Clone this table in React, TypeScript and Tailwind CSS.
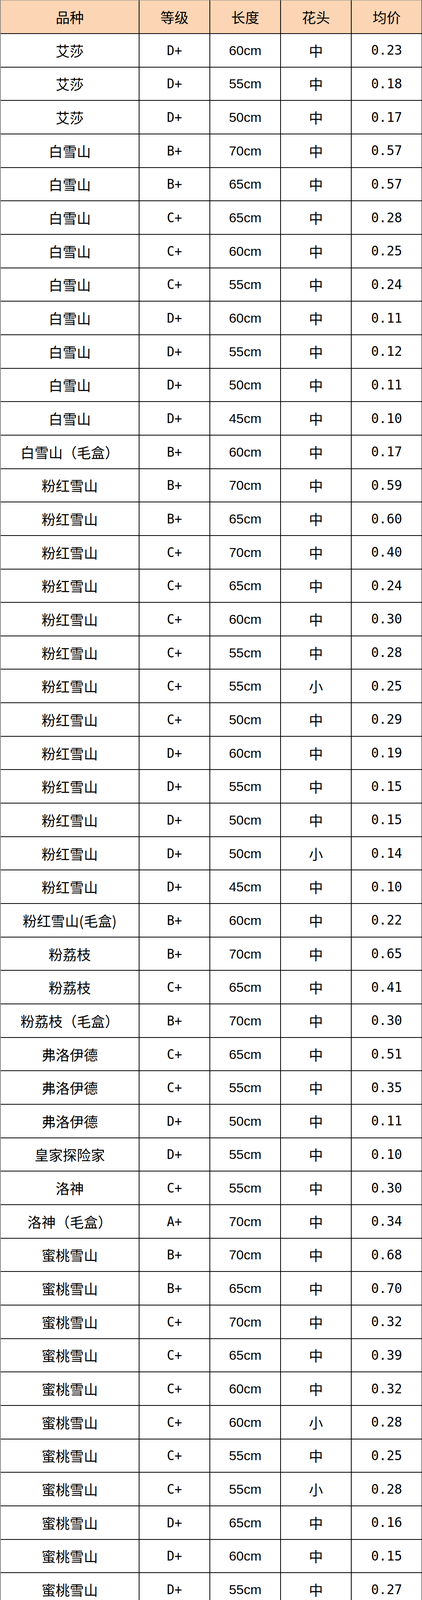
import React from "react";

type Row = [string, string, string, string, string];

const rows: Row[] = [
  ["艾莎", "D+", "60cm", "中", "0.23"],
  ["艾莎", "D+", "55cm", "中", "0.18"],
  ["艾莎", "D+", "50cm", "中", "0.17"],
  ["白雪山", "B+", "70cm", "中", "0.57"],
  ["白雪山", "B+", "65cm", "中", "0.57"],
  ["白雪山", "C+", "65cm", "中", "0.28"],
  ["白雪山", "C+", "60cm", "中", "0.25"],
  ["白雪山", "C+", "55cm", "中", "0.24"],
  ["白雪山", "D+", "60cm", "中", "0.11"],
  ["白雪山", "D+", "55cm", "中", "0.12"],
  ["白雪山", "D+", "50cm", "中", "0.11"],
  ["白雪山", "D+", "45cm", "中", "0.10"],
  ["白雪山（毛盒）", "B+", "60cm", "中", "0.17"],
  ["粉红雪山", "B+", "70cm", "中", "0.59"],
  ["粉红雪山", "B+", "65cm", "中", "0.60"],
  ["粉红雪山", "C+", "70cm", "中", "0.40"],
  ["粉红雪山", "C+", "65cm", "中", "0.24"],
  ["粉红雪山", "C+", "60cm", "中", "0.30"],
  ["粉红雪山", "C+", "55cm", "中", "0.28"],
  ["粉红雪山", "C+", "55cm", "小", "0.25"],
  ["粉红雪山", "C+", "50cm", "中", "0.29"],
  ["粉红雪山", "D+", "60cm", "中", "0.19"],
  ["粉红雪山", "D+", "55cm", "中", "0.15"],
  ["粉红雪山", "D+", "50cm", "中", "0.15"],
  ["粉红雪山", "D+", "50cm", "小", "0.14"],
  ["粉红雪山", "D+", "45cm", "中", "0.10"],
  ["粉红雪山(毛盒)", "B+", "60cm", "中", "0.22"],
  ["粉荔枝", "B+", "70cm", "中", "0.65"],
  ["粉荔枝", "C+", "65cm", "中", "0.41"],
  ["粉荔枝（毛盒）", "B+", "70cm", "中", "0.30"],
  ["弗洛伊德", "C+", "65cm", "中", "0.51"],
  ["弗洛伊德", "C+", "55cm", "中", "0.35"],
  ["弗洛伊德", "D+", "50cm", "中", "0.11"],
  ["皇家探险家", "D+", "55cm", "中", "0.10"],
  ["洛神", "C+", "55cm", "中", "0.30"],
  ["洛神（毛盒）", "A+", "70cm", "中", "0.34"],
  ["蜜桃雪山", "B+", "70cm", "中", "0.68"],
  ["蜜桃雪山", "B+", "65cm", "中", "0.70"],
  ["蜜桃雪山", "C+", "70cm", "中", "0.32"],
  ["蜜桃雪山", "C+", "65cm", "中", "0.39"],
  ["蜜桃雪山", "C+", "60cm", "中", "0.32"],
  ["蜜桃雪山", "C+", "60cm", "小", "0.28"],
  ["蜜桃雪山", "C+", "55cm", "中", "0.25"],
  ["蜜桃雪山", "C+", "55cm", "小", "0.28"],
  ["蜜桃雪山", "D+", "65cm", "中", "0.16"],
  ["蜜桃雪山", "D+", "60cm", "中", "0.15"],
  ["蜜桃雪山", "D+", "55cm", "中", "0.27"],
  ["蜜桃雪山", "D+", "50cm", "中", "0.15"],
  ["蜜桃雪山", "D+", "50cm", "小", "0.18"],
  ["蜜桃雪山", "D+", "45cm", "中", "0.15"],
  ["蜜桃雪山", "D+", "40cm", "中", "0.16"],
  ["蜜桃雪山（毛盒）", "B+", "60cm", "中", "0.23"],
  ["水瓶座", "C+", "55cm", "中", "0.33"],
  ["水瓶座", "D+", "50cm", "中", "0.21"],
  ["水瓶座", "D+", "45cm", "中", "0.12"],
  ["水瓶座", "D+", "40cm", "中", "0.12"],
  ["水瓶座", "D+", "40cm", "小", "0.10"],
  ["水瓶座（毛盒）", "A+", "65cm", "中", "0.26"],
];

const cjk = "font-['Noto_Sans_CJK_SC',sans-serif] font-normal text-[36px]";
const mono = "font-['DejaVu_Sans_Mono','Noto_Sans_CJK_SC',monospace]";
const arial = "font-['Liberation_Sans','Noto_Sans_CJK_SC',sans-serif] text-[34px]";

const base =
  "flex h-full items-center justify-center overflow-hidden whitespace-nowrap border-r-2 border-b-2 border-black text-black leading-none";

function Line({ r, header }: { r: Row; header?: boolean }) {
  const bg = header ? "bg-[#fcd5b4]" : "bg-white";
  return (
    <div className={`flex w-[1079px] shrink-0 ${header ? "h-[86px]" : "h-[85.67px]"}`}>
      <div className={`${base} ${bg} ${cjk} w-[355px]`}>{r[0]}</div>
      <div className={`${base} ${bg} w-[181px] ${header ? cjk : `${mono} text-[34px]`}`}>
        {header ? r[1] : <span className="inline-block scale-x-[0.95]">{r[1]}</span>}
      </div>
      <div className={`${base} ${bg} w-[181px] ${header ? cjk : arial}`}>{r[2]}</div>
      <div className={`${base} ${bg} w-[181px] ${cjk}`}>{r[3]}</div>
      <div className={`${base} ${bg} w-[181px] ${header ? cjk : `${mono} text-[33px]`}`}>{r[4]}</div>
    </div>
  );
}

export default function App() {
  return (
    <div className="flex w-[1080px] flex-col overflow-hidden border-t border-l-2 border-t-[#8a8a8a] border-l-[#8a8a8a] bg-white">
      <Line r={["品种", "等级", "长度", "花头", "均价"]} header />
      {rows.map((r, i) => (
        <Line key={i} r={r} />
      ))}
    </div>
  );
}
